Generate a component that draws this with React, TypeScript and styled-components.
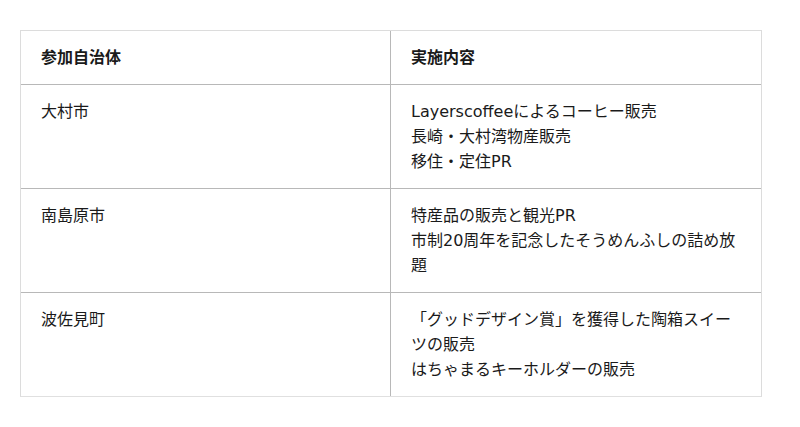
import React from 'react'
import styled, { createGlobalStyle } from 'styled-components'

const rows = [
    {
        town: '大村市',
        items: ['Layerscoffeeによるコーヒー販売', '長崎・大村湾物産販売', '移住・定住PR'],
    },
    {
        town: '南島原市',
        items: ['特産品の販売と観光PR', '市制20周年を記念したそうめんふしの詰め放題'],
    },
    {
        town: '波佐見町',
        items: ['「グッドデザイン賞」を獲得した陶箱スイーツの販売', 'はちゃまるキーホルダーの販売'],
    },
]

const App = () => {
    return (
        <>
            <GlobalStyle />
            <Page>
                <Table>
                    <Cell $head>参加自治体</Cell>
                    <Cell $head $right>実施内容</Cell>
                    {rows.map((row, i) => (
                        <React.Fragment key={row.town}>
                            <Cell $last={i === rows.length - 1}>{row.town}</Cell>
                            <Cell $right $last={i === rows.length - 1}>
                                {row.items.map(item => (
                                    <Line key={item}>{item}</Line>
                                ))}
                            </Cell>
                        </React.Fragment>
                    ))}
                </Table>
            </Page>
        </>
    )
}

const GlobalStyle = createGlobalStyle`
    body {
        margin: 0;
        background: #fff;
        color: #1a1a1a;
        font-family: "DejaVu Sans", "Noto Sans CJK JP", sans-serif;
    }
`

const Page = styled.main`
    padding: 30px 20px;
`

const Table = styled.div`
    display: grid;
    grid-template-columns: 1fr 1fr;
    width: 742px;
    box-sizing: border-box;
    border: 1px solid #dcdcdc;
    border-bottom-color: #e0e0e0;
`

const Cell = styled.div<{ $head?: boolean; $right?: boolean; $last?: boolean }>`
    padding: 14px 20px;
    font-size: 16px;
    line-height: 25px;
    font-weight: ${({ $head }) => ($head ? 'bold' : 'normal')};
    border-right: ${({ $right }) => ($right ? 'none' : '1px solid #b8b8b8')};
    border-bottom: ${({ $last }) => ($last ? 'none' : '1px solid #b8b8b8')};
    min-height: ${({ $head }) => ($head ? '25px' : '75px')};
`

const Line = styled.div``

export default App
